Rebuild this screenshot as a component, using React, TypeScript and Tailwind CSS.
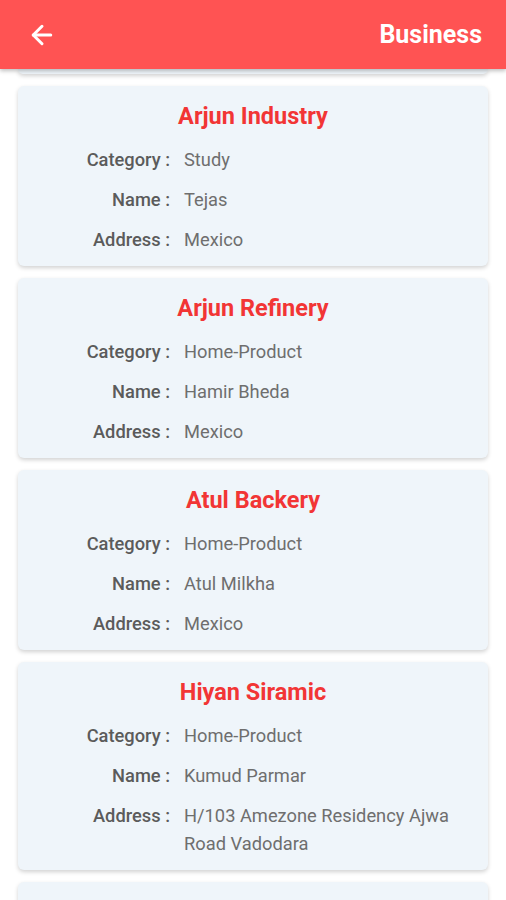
import React from 'react';
import { ArrowLeft } from 'lucide-react';

type Business = {
  title: string;
  category: string;
  name: string;
  address: string;
};

const businesses: Business[] = [
  { title: 'Arjun Industry', category: 'Study', name: 'Tejas', address: 'Mexico' },
  { title: 'Arjun Refinery', category: 'Home-Product', name: 'Hamir Bheda', address: 'Mexico' },
  { title: 'Atul Backery', category: 'Home-Product', name: 'Atul Milkha', address: 'Mexico' },
  {
    title: 'Hiyan Siramic',
    category: 'Home-Product',
    name: 'Kumud Parmar',
    address: 'H/103 Amezone Residency Ajwa Road Vadodara',
  },
];

const Row: React.FC<{ label: string; value: string }> = ({ label, value }) => (
  <div className="grid grid-cols-[152px_1fr] gap-x-[14px] text-[18.3px] leading-[28px]">
    <span className="text-right font-medium text-[#5b5b5b]">{label} :</span>
    <span className="text-[#6e6e6e]">{value}</span>
  </div>
);

const BusinessCard: React.FC<{ item: Business }> = ({ item }) => (
  <div className="rounded-[6px] bg-[#eff5fa] pt-[16px] pb-[12px] shadow-[0_2px_4px_rgba(0,0,0,0.18)]">
    <h3 className="text-center text-[23.5px] font-bold leading-[28px] text-[#f23535]">{item.title}</h3>
    <div className="mt-[16px] flex flex-col gap-[12px] pr-[20px]">
      <Row label="Category" value={item.category} />
      <Row label="Name" value={item.name} />
      <Row label="Address" value={item.address} />
    </div>
  </div>
);

export default function App() {
  return (
    <div className="h-[900px] overflow-hidden bg-white font-['Roboto',sans-serif]">
      {/* Top bar */}
      <div className="relative z-10 flex h-[69px] items-center justify-between bg-[#ff5353] pl-[27px] pr-[24px] shadow-[0_2px_4px_rgba(0,0,0,0.25)]">
        <ArrowLeft className="text-white" size={30} strokeWidth={2.4} />
        <h1 className="text-[25px] font-bold text-white">Business</h1>
      </div>

      {/* List */}
      <div className="flex flex-col gap-[12px] px-[18px]">
        {/* previous card, scrolled under the bar */}
        <div className="h-[5px] rounded-b-[6px] bg-[#eff5fa] shadow-[0_2px_4px_rgba(0,0,0,0.18)]" />
        {businesses.map((b) => (
          <BusinessCard key={b.title} item={b} />
        ))}
        {/* next card, below the fold */}
        <div className="h-[180px] rounded-[6px] bg-[#eff5fa] shadow-[0_2px_4px_rgba(0,0,0,0.18)]" />
      </div>
    </div>
  );
}
